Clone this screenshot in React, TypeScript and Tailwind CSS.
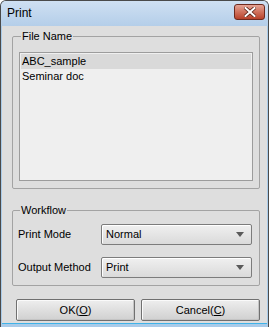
import React from "react";

function Combo({ value }: { value: string }) {
  return (
    <div className="flex h-[21px] w-[151px] items-center justify-between rounded-[2px] border border-[#7c7c7c] bg-gradient-to-b from-[#f0f0f0] to-[#dadada] pl-[4px] pr-[7px] shadow-[inset_1px_1px_0_#ffffff]">
      <span>{value}</span>
      <svg width="8" height="5" viewBox="0 0 8 5">
        <path d="M0 0H8L4 5Z" fill="#5a5a5a" />
      </svg>
    </div>
  );
}

function Btn({ label, hot }: { label: string; hot: string }) {
  return (
    <button className="flex h-[22px] w-[120px] items-center justify-center rounded-[2px] border border-[#707070] bg-gradient-to-b from-[#eeeeee] to-[#d0d0d0] shadow-[inset_1px_1px_0_#fafafa,inset_-1px_-1px_0_#c4c4c4]">
      {label}(<span className="underline">{hot}</span>)
    </button>
  );
}

export default function App() {
  return (
    <div className="h-[328px] w-[271px] bg-white font-['Liberation_Sans',Arial,sans-serif] text-[11px] leading-[13px] text-black">
      <div className="flex h-[327px] w-[269px] flex-col overflow-hidden rounded-t-[6px] border-x border-t border-[#4a4a4a] bg-[#a9cbe9]">
        {/* Title bar */}
        <div className="flex h-[25px] shrink-0 items-center justify-between bg-gradient-to-b from-[#cfe0f2] to-[#b4cee9] pl-[6px] pr-[3px]">
          <span className="text-[12px]">Print</span>
          <div className="mb-[3px] flex h-[16px] w-[31px] items-center justify-center rounded-[3px] border border-[#6e2a1e] bg-gradient-to-b from-[#e4a496] via-[#d0715c] to-[#b8412a]">
            <svg width="12" height="10" viewBox="0 0 12 10">
              <path d="M1.5 1L10.5 9M10.5 1L1.5 9" stroke="#5a2418" strokeWidth="3.6" strokeLinecap="square" />
              <path d="M1.5 1L10.5 9M10.5 1L1.5 9" stroke="#ffffff" strokeWidth="2" strokeLinecap="square" />
            </svg>
          </div>
        </div>

        {/* Body */}
        <div className="mx-[1px] flex h-[298px] flex-col border-b border-[#3fb3e8] bg-[#dedede] pl-[10px] pr-[7px] pt-[4px]">
          <fieldset className="rounded-[2px] border border-[#a3a3a3] px-[6px] pb-[7px]">
            <legend className="ml-[2px] px-[1px]">File Name</legend>
            <div className="mt-[9px] h-[129px] border border-[#9c9c9c] bg-[#efefef] p-[1px]">
              <div className="h-[15px] bg-[#d9d9d9] pl-[1px] leading-[15px]">ABC_sample</div>
              <div className="h-[15px] pl-[1px] leading-[15px]">Seminar doc</div>
            </div>
          </fieldset>

          <fieldset className="mt-[15px] rounded-[2px] border border-[#a3a3a3] pb-[7px] pl-[5px] pr-[7px]">
            <legend className="ml-[2px] px-[1px]">Workflow</legend>
            <div className="mt-[7px] flex flex-col gap-[12px]">
              <div className="flex items-center justify-between">
                <span>Print Mode</span>
                <Combo value="Normal" />
              </div>
              <div className="flex items-center justify-between">
                <span>Output Method</span>
                <Combo value="Print" />
              </div>
            </div>
          </fieldset>

          <div className="mt-[13px] flex gap-[6px] pl-[4px]">
            <Btn label="OK" hot="O" />
            <Btn label="Cancel" hot="C" />
          </div>
        </div>
      </div>
    </div>
  );
}
